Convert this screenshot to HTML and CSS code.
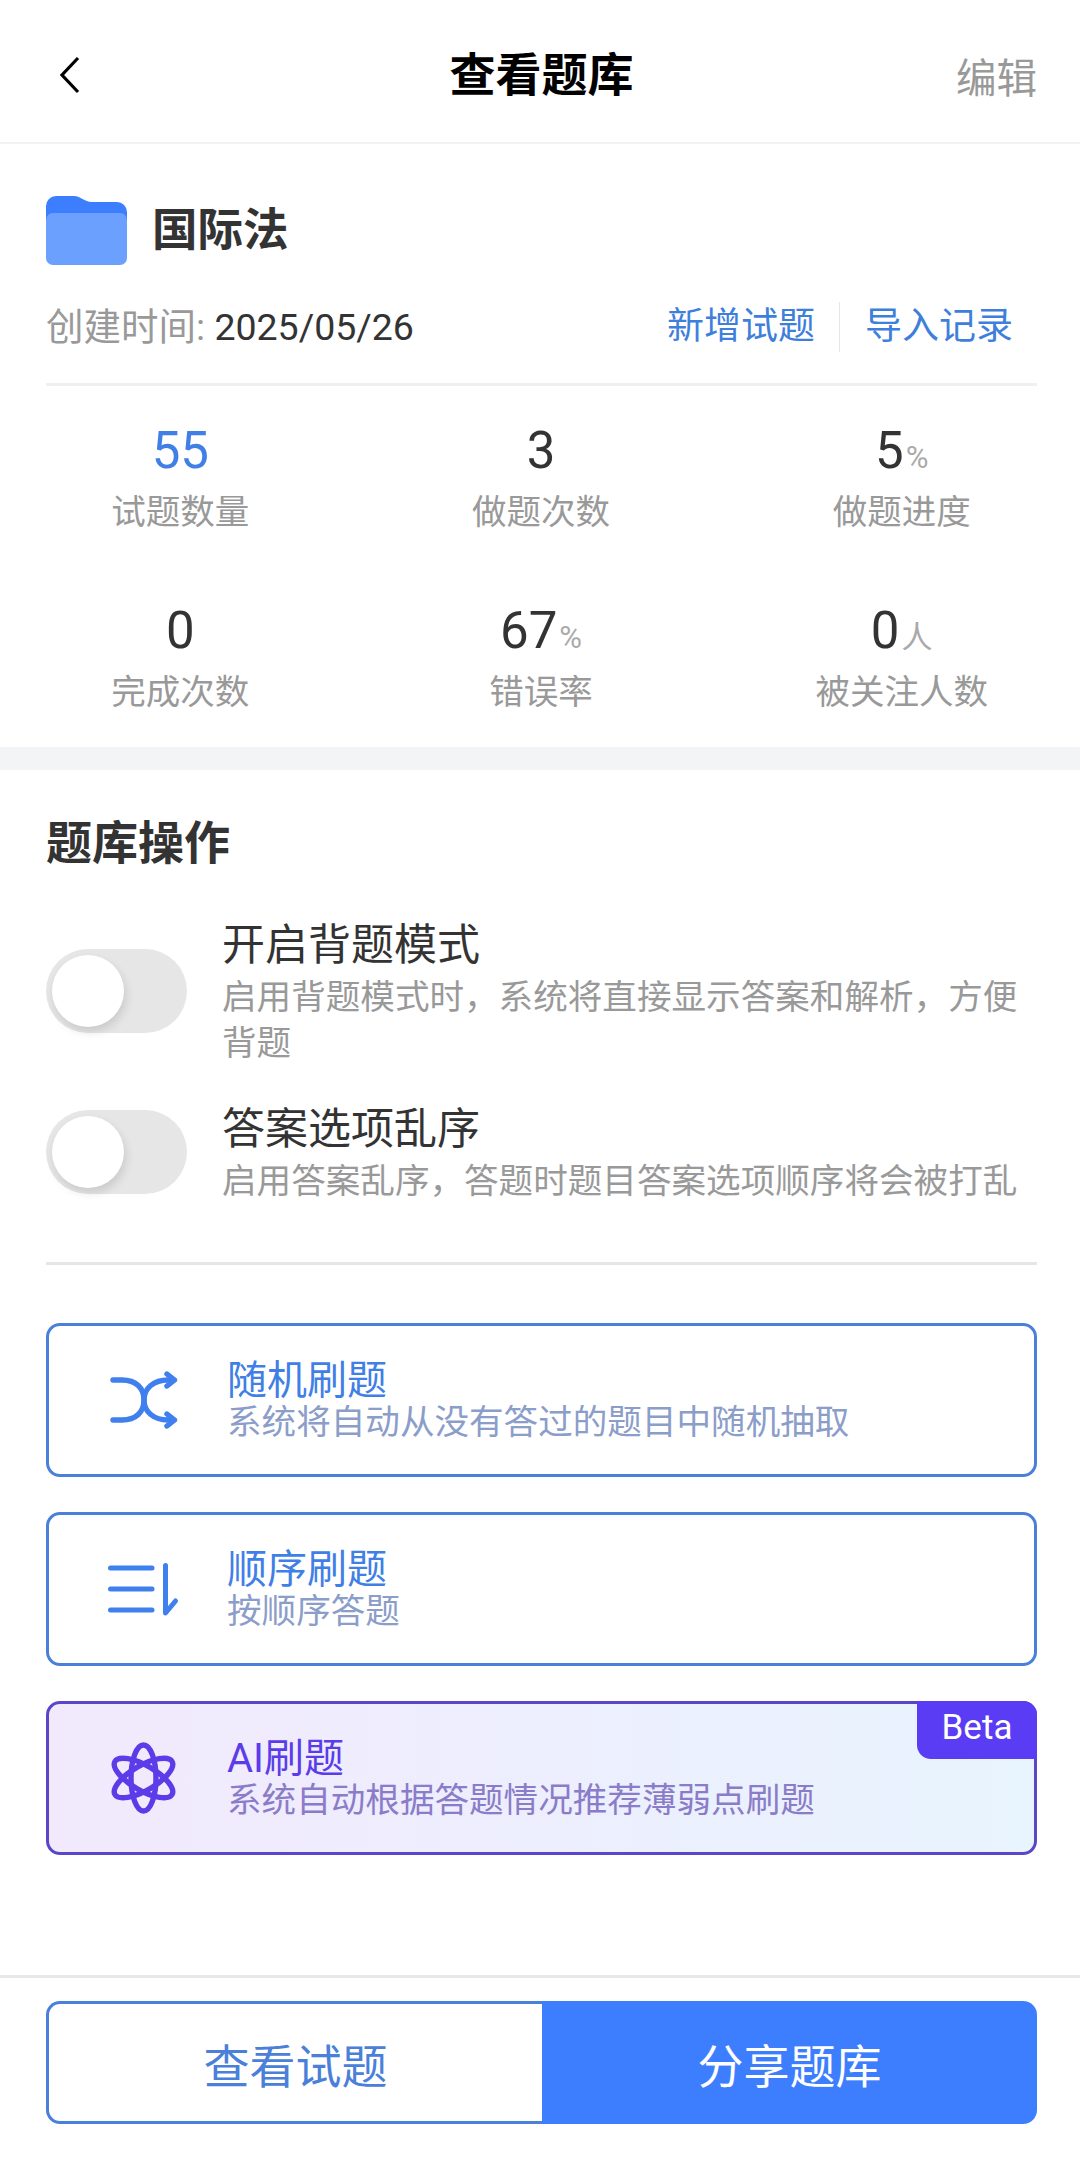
FILE: index.html
```html
<!DOCTYPE html>
<html lang="zh-CN">
<head>
    <meta charset="UTF-8">
    <meta name="viewport" content="width=device-width, initial-scale=1.0">
    <title>查看题库</title>
    <link rel="stylesheet" href="styles.css">
</head>
<body>
    <header class="topbar">
        <div class="topbar-side">
            <svg class="back-icon" viewBox="0 0 24 40" aria-hidden="true">
                <path d="M20 3 L4 20 L20 37" fill="none" stroke="#000" stroke-width="3.2"/>
            </svg>
        </div>
        <h1 class="topbar-title">查看题库</h1>
        <div class="topbar-side topbar-edit">编辑</div>
    </header>

    <section class="info">
        <div class="info-name">
            <svg class="folder-icon" viewBox="0 0 81 69" aria-hidden="true">
                <path d="M0 10 a10 10 0 0 1 10 -10 H28 c7 0 10 6 18 6 H71 a10 10 0 0 1 10 10 V40 H0 Z" fill="#3d7eff"/>
                <rect x="0" y="17" width="81" height="52" rx="7" fill="#6ba0ff"/>
            </svg>
            <h2 class="info-title">国际法</h2>
        </div>
        <div class="info-meta">
            <div class="info-date"><span class="info-date-label">创建时间:</span> 2025/05/26</div>
            <div class="info-links">
                <a class="info-link">新增试题</a>
                <a class="info-link info-link-last">导入记录</a>
            </div>
        </div>
    </section>

    <section class="stats">
        <div class="stat">
            <div class="stat-value stat-blue">55</div>
            <div class="stat-label">试题数量</div>
        </div>
        <div class="stat">
            <div class="stat-value">3</div>
            <div class="stat-label">做题次数</div>
        </div>
        <div class="stat">
            <div class="stat-value">5<span class="stat-unit">%</span></div>
            <div class="stat-label">做题进度</div>
        </div>
        <div class="stat">
            <div class="stat-value">0</div>
            <div class="stat-label">完成次数</div>
        </div>
        <div class="stat">
            <div class="stat-value">67<span class="stat-unit">%</span></div>
            <div class="stat-label">错误率</div>
        </div>
        <div class="stat">
            <div class="stat-value">0<span class="stat-unit">人</span></div>
            <div class="stat-label">被关注人数</div>
        </div>
    </section>

    <section class="ops">
        <h2 class="ops-title">题库操作</h2>

        <div class="option">
            <div class="toggle"><div class="toggle-thumb"></div></div>
            <div class="option-text">
                <div class="option-name">开启背题模式</div>
                <div class="option-desc">启用背题模式时，系统将直接显示答案和解析，方便背题</div>
            </div>
        </div>
        <div class="option option-second">
            <div class="toggle"><div class="toggle-thumb"></div></div>
            <div class="option-text">
                <div class="option-name">答案选项乱序</div>
                <div class="option-desc">启用答案乱序，答题时题目答案选项顺序将会被打乱</div>
            </div>
        </div>

        <div class="ops-line"></div>

        <div class="card">
            <svg class="card-icon" viewBox="0 0 120 120" aria-hidden="true">
                <g fill="none" stroke="#3f7fee" stroke-width="5.4" stroke-linecap="round" stroke-linejoin="round">
                    <path d="M23 40 H32 C46 40 54 48 54 60 C54 72 46 80 32 80 H23"/>
                    <path d="M83 40 H78 C64 40 54 48 54 60 C54 72 64 80 78 80 H83"/>
                    <path d="M77 34 L84.5 40 L77 46"/>
                    <path d="M77 74 L84.5 80 L77 86"/>
                </g>
            </svg>
            <div class="card-text">
                <div class="card-name">随机刷题</div>
                <div class="card-desc">系统将自动从没有答过的题目中随机抽取</div>
            </div>
        </div>

        <div class="card">
            <svg class="card-icon" viewBox="0 0 120 120" aria-hidden="true">
                <g fill="none" stroke="#3f7fee" stroke-width="5" stroke-linecap="round" stroke-linejoin="round">
                    <path d="M20.5 39 H62"/>
                    <path d="M20.5 60 H62"/>
                    <path d="M20.5 81 H62"/>
                    <path d="M75.5 36.5 V84 L85.5 72"/>
                </g>
            </svg>
            <div class="card-text">
                <div class="card-name">顺序刷题</div>
                <div class="card-desc">按顺序答题</div>
            </div>
        </div>

        <div class="card card-ai">
            <svg class="card-icon" viewBox="0 0 120 120" aria-hidden="true">
                <g fill="none" stroke="#5a3de8" stroke-width="5.4">
                    <ellipse cx="53.5" cy="60" rx="12.5" ry="33"/>
                    <ellipse cx="53.5" cy="60" rx="12.5" ry="33" transform="rotate(60 53.5 60)"/>
                    <ellipse cx="53.5" cy="60" rx="12.5" ry="33" transform="rotate(-60 53.5 60)"/>
                </g>
            </svg>
            <div class="card-text">
                <div class="card-name">AI刷题</div>
                <div class="card-desc">系统自动根据答题情况推荐薄弱点刷题</div>
            </div>
            <div class="card-badge">Beta</div>
        </div>
    </section>

    <footer class="bottombar">
        <div class="bottombar-btn">查看试题</div>
        <div class="bottombar-btn bottombar-btn-main">分享题库</div>
    </footer>
</body>
</html>
```

FILE: styles.css
```css
* {
    box-sizing: border-box;
}

body {
    margin: 0;
    min-height: 2174px;
    display: flex;
    flex-direction: column;
    background-color: #fff;
    color: #333;
    font-family: Roboto, "Noto Sans CJK SC", sans-serif;
}

h1, h2 {
    margin: 0;
}

/* top bar */
.topbar {
    height: 144px;
    padding: 8px 43px 0 46px;
    display: grid;
    grid-template-columns: 1fr auto 1fr;
    align-items: center;
    border-bottom: 2px solid #f2f2f2;
}

.back-icon {
    display: block;
    width: 24px;
    height: 40px;
    margin-left: 12px;
}

.topbar-title {
    font-size: 46px;
    line-height: 60px;
    color: #000;
    font-weight: 700;
}

.topbar-edit {
    margin-top: 7px;
    text-align: right;
    font-size: 40.5px;
    line-height: 56px;
    color: #999;
}

/* info */
.info {
    padding: 52px 43px 0 46px;
}

.info-name {
    display: flex;
    align-items: center;
    gap: 25px;
}

.folder-icon {
    display: block;
    width: 81px;
    height: 69px;
}

.info-title {
    font-size: 45.5px;
    line-height: 69px;
    font-weight: 700;
    color: #333;
}

.info-meta {
    margin-top: 37px;
    padding-bottom: 31px;
    display: flex;
    justify-content: space-between;
    align-items: center;
    border-bottom: 3px solid #f0f0f0;
    font-size: 37.5px;
    line-height: 50px;
}

.info-date-label {
    color: #999;
}

.info-links {
    display: flex;
    align-items: center;
    font-size: 37px;
    color: #3f7fdc;
}

.info-link {
    padding-right: 24px;
    border-right: 1px solid #e6e6e6;
}

.info-link-last {
    padding: 0 24px 0 25px;
    border-right: none;
}

/* stats */
.stats {
    display: grid;
    grid-template-columns: repeat(3, 1fr);
    row-gap: 69px;
    padding: 37px 0 33px;
    margin-right: -2px;
    text-align: center;
    border-bottom: 23px solid #f3f4f6;
}

.stat-value {
    height: 56px;
    font-size: 51px;
    line-height: 56px;
    color: #333;
}

.stat-blue {
    color: #3f7fe6;
}

.stat-unit {
    font-size: 31px;
    line-height: 1;
    color: #aaa;
    margin-left: 2px;
}

.stat-label {
    margin-top: 11px;
    font-size: 34.5px;
    line-height: 44px;
    color: #999;
}

/* operations */
.ops {
    padding: 43px 43px 0 46px;
}

.ops-title {
    font-size: 46px;
    line-height: 60px;
    font-weight: 700;
    color: #333;
}

.option {
    margin-top: 43px;
    display: flex;
    align-items: center;
    gap: 35px;
}

.option-second {
    margin-top: 34px;
}

.toggle {
    flex: none;
    width: 141px;
    height: 84px;
    padding-left: 6px;
    display: flex;
    align-items: center;
    border-radius: 42px;
    background-color: #e6e6e6;
}

.toggle-thumb {
    width: 72px;
    height: 72px;
    border-radius: 50%;
    background-color: #fff;
    box-shadow: 2px 5px 10px rgba(0, 0, 0, 0.12);
}

.option-name {
    font-size: 43px;
    line-height: 58px;
    color: #333;
}

.option-desc {
    font-size: 34.6px;
    line-height: 46px;
    color: #999;
}

.ops-line {
    margin: 58px 0;
    height: 3px;
    background-color: #e6e6e6;
}

/* cards */
.card {
    position: relative;
    height: 154px;
    margin-bottom: 35px;
    padding-left: 41px;
    display: flex;
    align-items: center;
    gap: 17px;
    border: 3px solid #4a80d9;
    border-radius: 14px;
}

.card-icon {
    flex: none;
    display: block;
    width: 120px;
    height: 120px;
}

.card-text {
    padding-top: 2px;
}

.card-name {
    font-size: 40px;
    line-height: 42px;
    color: #3f7fe6;
}

.card-desc {
    font-size: 34.6px;
    line-height: 40px;
    color: #8b9dc9;
}

.card-ai {
    margin-bottom: 0;
    border-color: #5a46c8;
    background: linear-gradient(90deg, #f2e9fd, #e8f4fe);
}

.card-ai .card-name {
    color: #5a3de8;
}

.card-ai .card-desc {
    color: #8a7cc8;
}

.card-badge {
    position: absolute;
    top: -3px;
    right: -3px;
    width: 120px;
    height: 58px;
    text-align: center;
    font-size: 35px;
    line-height: 54px;
    color: #fff;
    background-color: #5a3cf4;
    border-radius: 0 14px 0 14px;
}

/* bottom bar */
.bottombar {
    margin-top: auto;
    padding: 23px 43px 50px 46px;
    display: flex;
    border-top: 3px solid #e8e8e8;
}

.bottombar-btn {
    flex: none;
    width: 496px;
    height: 123px;
    display: flex;
    justify-content: center;
    align-items: center;
    font-size: 46px;
    color: #4a80d9;
    border: 3px solid #4a80d9;
    border-right: none;
    border-radius: 14px 0 0 14px;
}

.bottombar-btn-main {
    width: 495px;
    color: #fff;
    background-color: #3d7eff;
    border: none;
    border-radius: 0 14px 14px 0;
}
```
